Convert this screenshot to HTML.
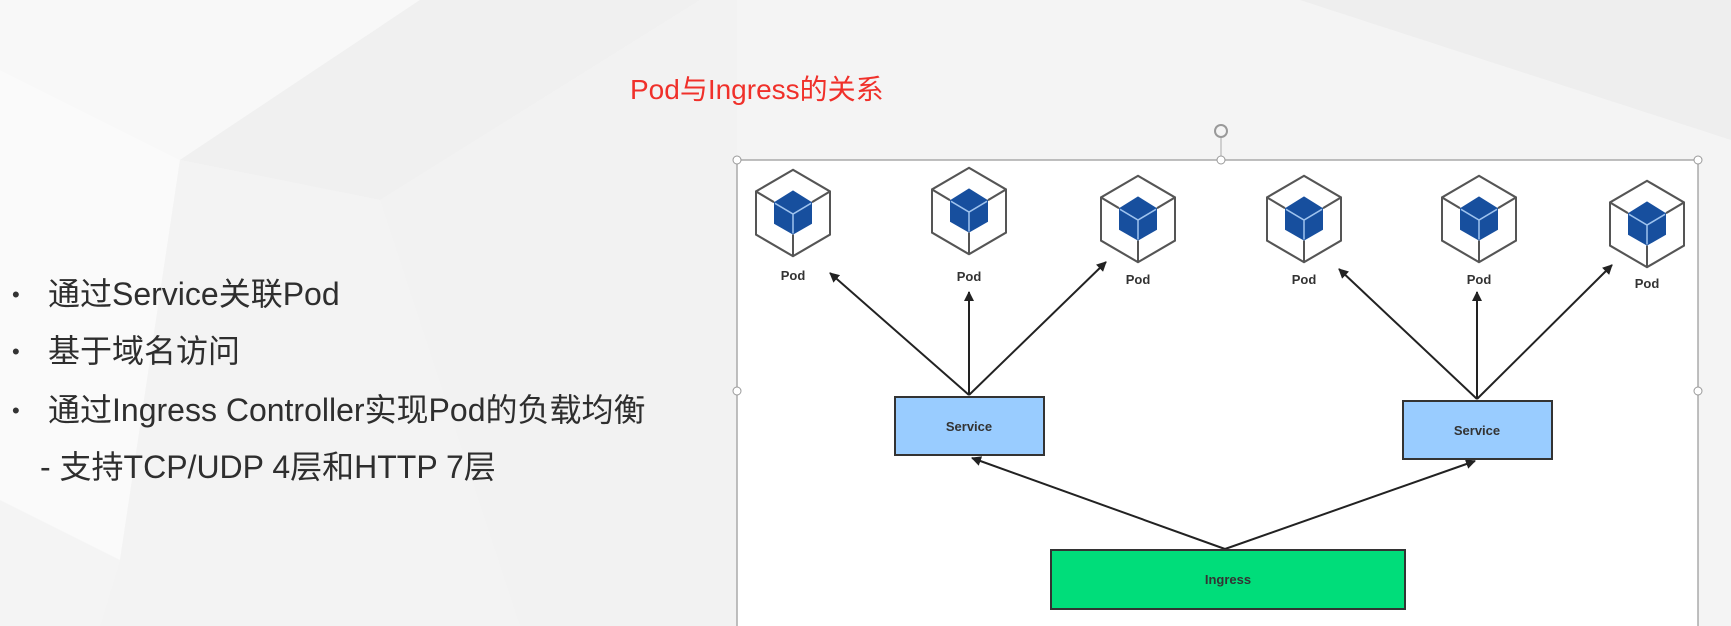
<!DOCTYPE html>
<html><head><meta charset="utf-8"><style>
html,body{margin:0;padding:0}
body{width:1731px;height:626px;overflow:hidden;background:#f4f4f4;position:relative;font-family:"Liberation Sans","Noto Sans CJK SC",sans-serif}
.t{position:absolute;color:#2e2e2e;font-size:32px;white-space:nowrap;line-height:34px}
.b{position:absolute;left:12px;font-size:22px;color:#333}
</style></head><body>
<svg width="1731" height="626" style="position:absolute;left:0;top:0">
<polygon points="0,0 420,0 180,160 0,70" fill="#f8f8f8"/>
<polygon points="180,160 420,0 700,0 380,200" fill="#f0f0f0"/>
<polygon points="0,70 180,160 120,560 0,500" fill="#fafafa"/>
<polygon points="380,200 700,0 737,0 737,626 520,626" fill="#f2f2f2"/>
<polygon points="120,560 180,160 380,200 520,626 100,626" fill="#f3f3f3"/>
<polygon points="1300,0 1731,0 1731,140" fill="#eeeeee"/>
</svg>
<div style="position:absolute;left:630px;top:68px;color:#f0302a;font-size:28px;">Pod与Ingress的关系</div>

<div class="b" style="top:282px">•</div><div class="t" style="left:48px;top:277px">通过Service关联Pod</div>
<div class="b" style="top:339px">•</div><div class="t" style="left:48px;top:334px">基于域名访问</div>
<div class="b" style="top:398px">•</div><div class="t" style="left:48px;top:393px">通过Ingress Controller实现Pod的负载均衡</div>
<div class="t" style="left:40px;top:450px">- 支持TCP/UDP 4层和HTTP 7层</div>

<svg width="1731" height="626" style="position:absolute;left:0;top:0">
<defs>
<g id="pod" transform="scale(1,1.08)">
<polygon points="0,-40 37,-20 37,20 0,40 -37,20 -37,-20" fill="#fff" stroke="#555" stroke-width="2"/>
<line x1="-37" y1="-20" x2="-19" y2="-10" stroke="#555" stroke-width="2"/>
<line x1="37" y1="-20" x2="19" y2="-10" stroke="#555" stroke-width="2"/>
<line x1="0" y1="40" x2="0" y2="20" stroke="#555" stroke-width="2"/>
<polygon points="0,-21 19,-10 19,10 0,20 -19,10 -19,-10" fill="#174f9e"/>
<path d="M0,1 L-18,-9 M0,1 L18,-9 M0,1 L0,19" stroke="#9fc3ee" stroke-width="1.5" fill="none"/>
</g>
<marker id="ar" markerWidth="10" markerHeight="10" refX="9" refY="5" orient="auto" markerUnits="userSpaceOnUse"><path d="M0,0 L10,5 L0,10 Z" fill="#222"/></marker>
</defs>
<rect x="737" y="160" width="961" height="470" fill="#fff" stroke="#aaa" stroke-width="1.5"/>
<line x1="1221" y1="136" x2="1221" y2="160" stroke="#aaa"/>
<circle cx="1221" cy="131" r="6" fill="none" stroke="#999" stroke-width="2"/>
<g fill="#fff" stroke="#999">
<circle cx="737" cy="160" r="4"/><circle cx="1221" cy="160" r="4"/><circle cx="1698" cy="160" r="4"/>
<circle cx="737" cy="391" r="4"/><circle cx="1698" cy="391" r="4"/>
</g>
<use href="#pod" x="793" y="213"/>
<use href="#pod" x="969" y="211"/>
<use href="#pod" x="1138" y="219"/>
<use href="#pod" x="1304" y="219"/>
<use href="#pod" x="1479" y="219"/>
<use href="#pod" x="1647" y="224"/>
<g font-family="Liberation Sans,sans-serif" font-weight="bold" font-size="13" fill="#333" text-anchor="middle">
<text x="793" y="280">Pod</text><text x="969" y="281">Pod</text><text x="1138" y="284">Pod</text>
<text x="1304" y="284">Pod</text><text x="1479" y="284">Pod</text><text x="1647" y="288">Pod</text>
</g>
<g stroke="#222" stroke-width="2" marker-end="url(#ar)">
<line x1="969" y1="395" x2="830" y2="273"/><line x1="969" y1="395" x2="969" y2="292"/><line x1="969" y1="395" x2="1106" y2="262"/>
<line x1="1477" y1="399" x2="1339" y2="269"/><line x1="1477" y1="399" x2="1477" y2="292"/><line x1="1477" y1="399" x2="1612" y2="265"/>
<line x1="1225" y1="549" x2="972" y2="458"/><line x1="1225" y1="549" x2="1475" y2="461"/>
</g>
<rect x="895" y="397" width="149" height="58" fill="#99ccff" stroke="#333" stroke-width="2"/>
<rect x="1403" y="401" width="149" height="58" fill="#99ccff" stroke="#333" stroke-width="2"/>
<rect x="1051" y="550" width="354" height="59" fill="#00dd7a" stroke="#333" stroke-width="2"/>
<g font-family="Liberation Sans,sans-serif" font-weight="bold" font-size="13" fill="#333" text-anchor="middle">
<text x="969" y="431">Service</text><text x="1477" y="435">Service</text><text x="1228" y="584">Ingress</text>
</g>
</svg>
</body></html>
